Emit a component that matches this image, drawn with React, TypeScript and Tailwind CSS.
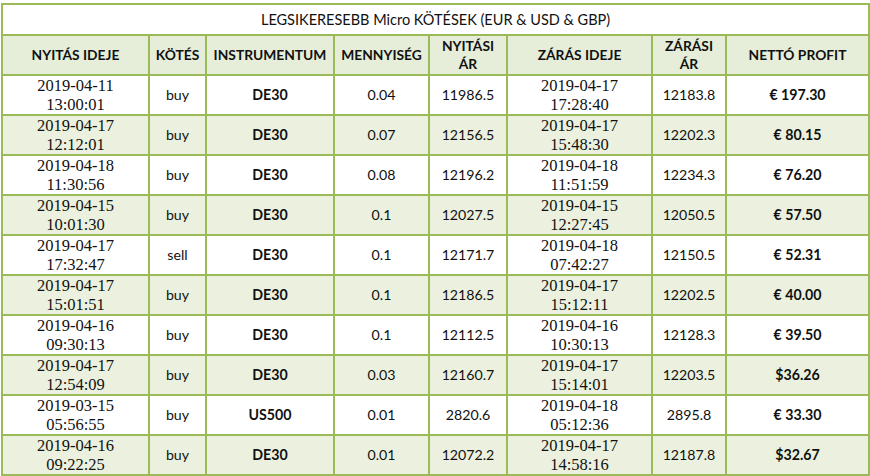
const rows = [
  { open: ['2019-04-11', '13:00:01'], side: 'buy', inst: 'DE30', qty: '0.04', openPrice: '11986.5', close: ['2019-04-17', '17:28:40'], closePrice: '12183.8', profit: '€ 197.30' },
  { open: ['2019-04-17', '12:12:01'], side: 'buy', inst: 'DE30', qty: '0.07', openPrice: '12156.5', close: ['2019-04-17', '15:48:30'], closePrice: '12202.3', profit: '€ 80.15' },
  { open: ['2019-04-18', '11:30:56'], side: 'buy', inst: 'DE30', qty: '0.08', openPrice: '12196.2', close: ['2019-04-18', '11:51:59'], closePrice: '12234.3', profit: '€ 76.20' },
  { open: ['2019-04-15', '10:01:30'], side: 'buy', inst: 'DE30', qty: '0.1', openPrice: '12027.5', close: ['2019-04-15', '12:27:45'], closePrice: '12050.5', profit: '€ 57.50' },
  { open: ['2019-04-17', '17:32:47'], side: 'sell', inst: 'DE30', qty: '0.1', openPrice: '12171.7', close: ['2019-04-18', '07:42:27'], closePrice: '12150.5', profit: '€ 52.31' },
  { open: ['2019-04-17', '15:01:51'], side: 'buy', inst: 'DE30', qty: '0.1', openPrice: '12186.5', close: ['2019-04-17', '15:12:11'], closePrice: '12202.5', profit: '€ 40.00' },
  { open: ['2019-04-16', '09:30:13'], side: 'buy', inst: 'DE30', qty: '0.1', openPrice: '12112.5', close: ['2019-04-16', '10:30:13'], closePrice: '12128.3', profit: '€ 39.50' },
  { open: ['2019-04-17', '12:54:09'], side: 'buy', inst: 'DE30', qty: '0.03', openPrice: '12160.7', close: ['2019-04-17', '15:14:01'], closePrice: '12203.5', profit: '$36.26' },
  { open: ['2019-03-15', '05:56:55'], side: 'buy', inst: 'US500', qty: '0.01', openPrice: '2820.6', close: ['2019-04-18', '05:12:36'], closePrice: '2895.8', profit: '€ 33.30' },
  { open: ['2019-04-16', '09:22:25'], side: 'buy', inst: 'DE30', qty: '0.01', openPrice: '12072.2', close: ['2019-04-17', '14:58:16'], closePrice: '12187.8', profit: '$32.67' },
];

const cell = 'border-2 border-[#9bbb59] text-center align-middle p-0';
const serif = "font-['Liberation_Serif',serif] text-[16.5px] leading-[19px] text-[#111]";

export default function App() {
  return (
    <div className="w-[870px] h-[476px] bg-white pt-[3px] pl-[1px] font-['Lato',sans-serif] text-[#111]">
      <table className="border-collapse table-fixed w-[867px]">
        <colgroup>
          <col className="w-[147px]" />
          <col className="w-[57px]" />
          <col className="w-[128px]" />
          <col className="w-[95px]" />
          <col className="w-[78px]" />
          <col className="w-[145px]" />
          <col className="w-[74px]" />
          <col className="w-[143px]" />
        </colgroup>
        <thead>
          <tr className="h-[31px]">
            <th colSpan={8} className={`${cell} font-normal text-[14.5px]`}>
              LEGSIKERESEBB Micro KÖTÉSEK (EUR &amp; USD &amp; GBP)
            </th>
          </tr>
          <tr className="h-[40px] bg-[#e6eed9] text-[13.8px] font-bold leading-[18px]">
            <th className={cell}>NYITÁS IDEJE</th>
            <th className={cell}>KÖTÉS</th>
            <th className={cell}>INSTRUMENTUM</th>
            <th className={cell}>MENNYISÉG</th>
            <th className={cell}>NYITÁSI<br />ÁR</th>
            <th className={cell}>ZÁRÁS IDEJE</th>
            <th className={cell}>ZÁRÁSI<br />ÁR</th>
            <th className={cell}>NETTÓ PROFIT</th>
          </tr>
        </thead>
        <tbody className="text-[14.2px]">
          {rows.map((r, i) => (
            <tr key={i} className={`h-[39.7px] ${i % 2 === 1 ? 'bg-[#ebf1de]' : 'bg-white'}`}>
              <td className={`${cell} ${serif}`}>{r.open[0]}<br />{r.open[1]}</td>
              <td className={cell}>{r.side}</td>
              <td className={`${cell} font-bold`}>{r.inst}</td>
              <td className={cell}>{r.qty}</td>
              <td className={cell}>{r.openPrice}</td>
              <td className={`${cell} ${serif}`}>{r.close[0]}<br />{r.close[1]}</td>
              <td className={cell}>{r.closePrice}</td>
              <td className={`${cell} font-bold`}>{r.profit}</td>
            </tr>
          ))}
        </tbody>
      </table>
    </div>
  );
}
